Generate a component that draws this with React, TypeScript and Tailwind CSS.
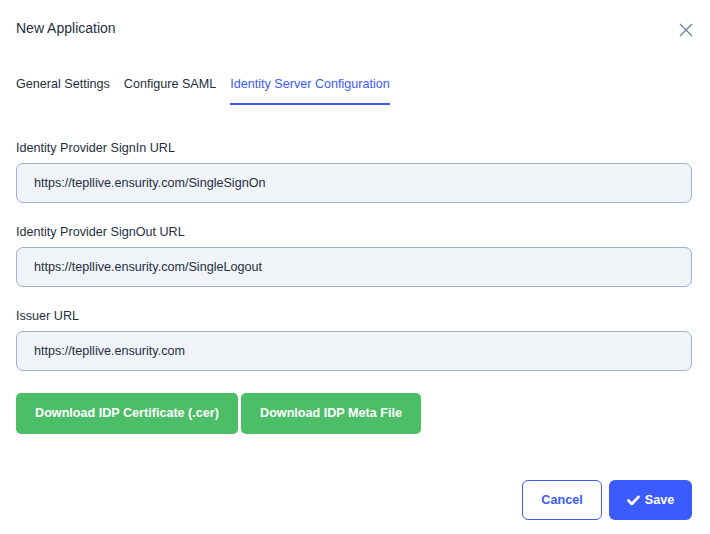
const font = { fontFamily: '"Liberation Sans", Arial, sans-serif' };

const fields = [
  { label: 'Identity Provider SignIn URL', value: 'https://tepllive.ensurity.com/SingleSignOn' },
  { label: 'Identity Provider SignOut URL', value: 'https://tepllive.ensurity.com/SingleLogout' },
  { label: 'Issuer URL', value: 'https://tepllive.ensurity.com' },
];

export default function App() {
  return (
    <div className="w-[710px] h-[534px] bg-white text-[#25303f]" style={font}>
      <div className="flex items-center justify-between pl-4 pr-[17px] pt-[19px]">
        <h1 className="text-[14px] leading-[18px]">New Application</h1>
        <button className="text-[#6f8294] mt-[3px]">
          <svg width="14" height="14" viewBox="0 0 14 14" fill="none" stroke="currentColor" strokeWidth="1.4">
            <path d="M1 1L13 13M13 1L1 13" />
          </svg>
        </button>
      </div>

      <div className="flex gap-[14px] px-4 mt-[39px] text-[12.6px] leading-[16px]">
        <div className="pb-[13px]">General Settings</div>
        <div className="pb-[13px]">Configure SAML</div>
        <div className="pb-[11px] text-[#3b5bfd] border-b-2 border-[#3b5bfd]">Identity Server Configuration</div>
      </div>

      <div className="pl-4 pr-[18px] mt-[35px] flex flex-col gap-[21px]">
        {fields.map((f) => (
          <div key={f.label} className="flex flex-col gap-[7px]">
            <label className="block text-[12.6px] leading-[16px]">{f.label}</label>
            <input
              readOnly
              value={f.value}
              className="h-[40px] w-full rounded-[7px] border border-[#9fb0d0] bg-[#f0f3f7] px-[17px] text-[12.6px] text-[#25303f] outline-none"
            />
          </div>
        ))}
      </div>

      <div className="flex gap-[3px] px-4 mt-[22px]">
        <button className="h-[41px] w-[222px] rounded-[5px] bg-[#4cbe67] text-white text-[12.6px] font-bold">
          Download IDP Certificate (.cer)
        </button>
        <button className="h-[41px] w-[180px] rounded-[5px] bg-[#4cbe67] text-white text-[12.6px] font-bold">
          Download IDP Meta File
        </button>
      </div>

      <div className="flex justify-end gap-[7px] px-[18px] mt-[46px]">
        <button className="h-[40px] w-[80px] rounded-[6px] border border-[#3b5bfd] bg-white text-[#3b5bfd] text-[12.6px] font-bold">
          Cancel
        </button>
        <button className="h-[40px] w-[83px] rounded-[6px] bg-[#3b5bfd] text-white text-[12.6px] font-bold flex items-center justify-center gap-[5px]">
          <svg width="13" height="11" viewBox="0 0 13 11" fill="none" stroke="currentColor" strokeWidth="2.6" strokeLinecap="round" strokeLinejoin="round">
            <path d="M1.5 5.5L4.8 9L11.5 1.8" />
          </svg>
          Save
        </button>
      </div>
    </div>
  );
}
